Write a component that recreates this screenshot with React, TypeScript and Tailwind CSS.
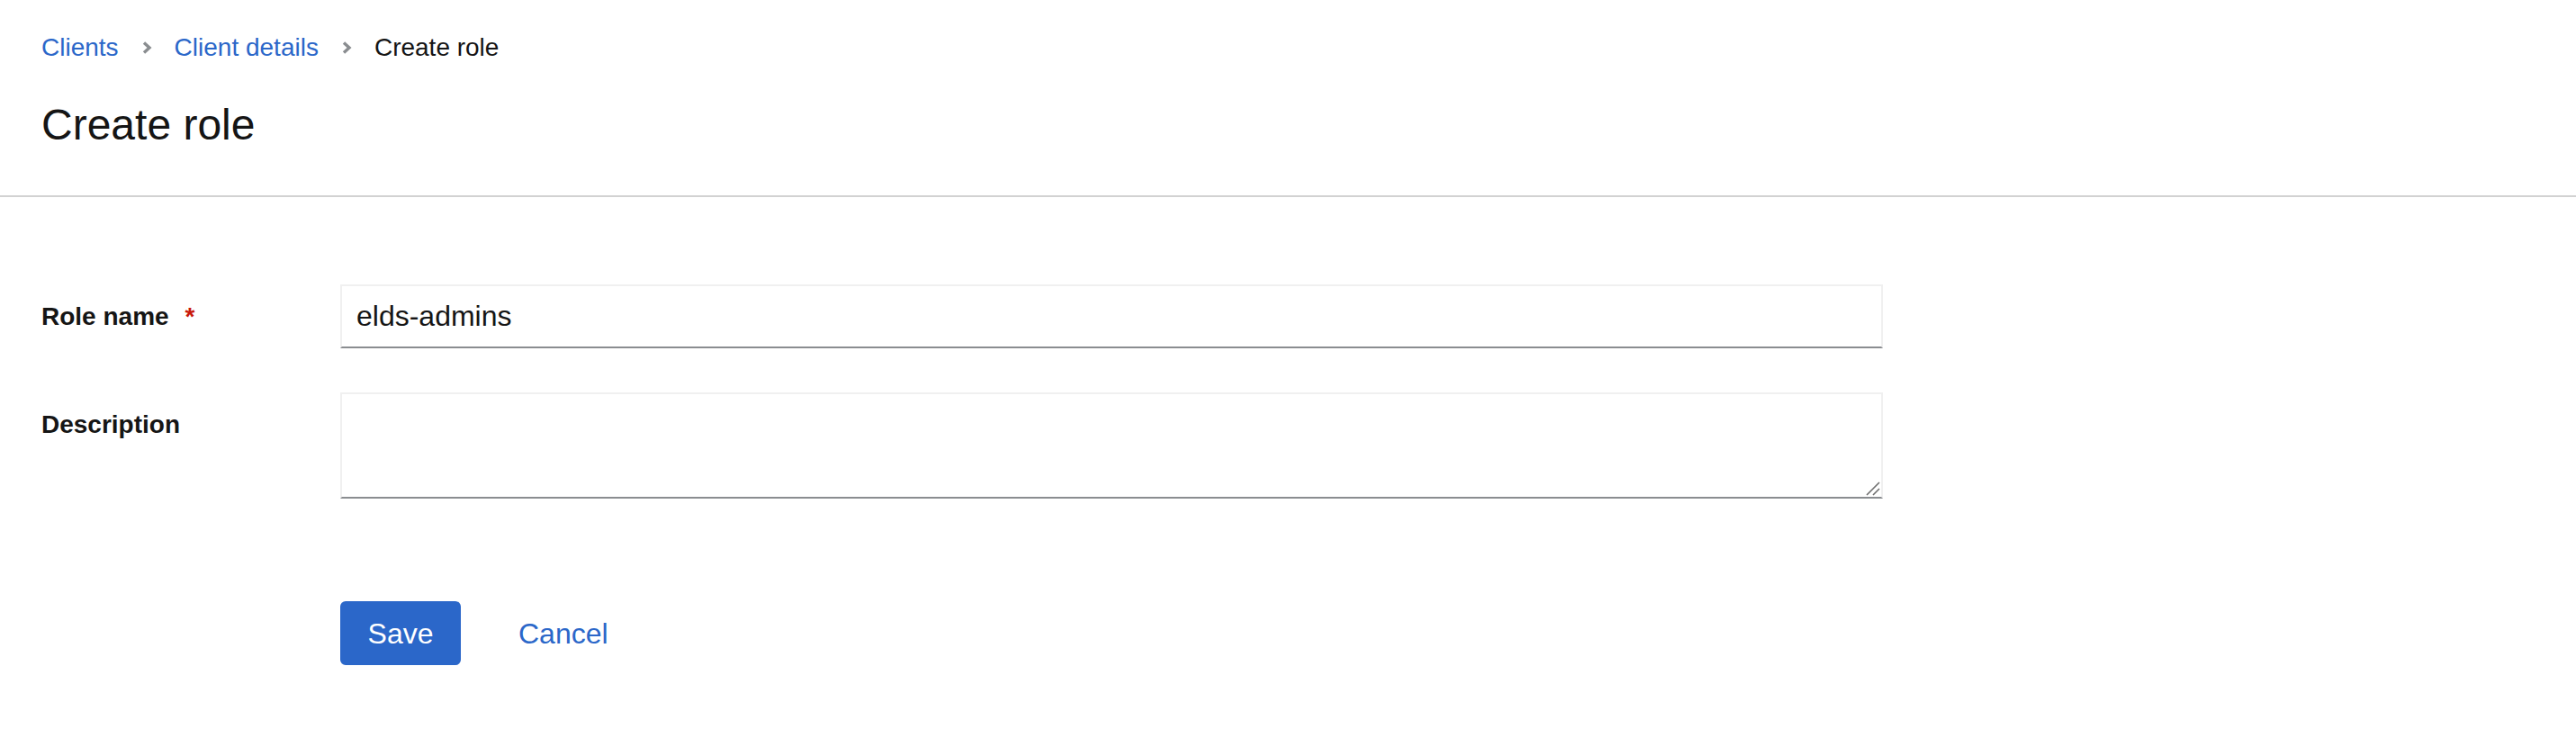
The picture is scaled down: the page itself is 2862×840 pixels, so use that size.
import { useState } from 'react'

const font = { fontFamily: '"Liberation Sans", Arial, sans-serif' }

function Chevron() {
  return (
    <svg width="12" height="14" viewBox="0 0 12 14" className="ml-[26px] mr-[24px]">
      <path d="M2 1.5 L8 7 L2 12.5" fill="none" stroke="#8a8d90" strokeWidth="3.4" strokeLinejoin="miter" />
    </svg>
  )
}

export default function App() {
  const [name, setName] = useState('elds-admins')
  const [desc, setDesc] = useState('')

  return (
    <div className="min-h-[840px] w-full bg-white text-[#151515]" style={font}>
      {/* Header */}
      <section className="px-[46px] pt-[32px] pb-[47px] border-b-2 border-[#d2d2d2]">
        <nav className="flex items-center text-[28px] leading-[42px]">
          <a className="text-[#2b67c9]" href="#">Clients</a>
          <Chevron />
          <a className="text-[#2b67c9]" href="#">Client details</a>
          <Chevron />
          <span className="text-[#151515]">Create role</span>
        </nav>
        <h1 className="mt-[34px] text-[48px] leading-[62px] font-normal">Create role</h1>
      </section>

      {/* Form */}
      <section className="px-[46px] pt-[97px]">
        <div className="grid grid-cols-[332px_1714px] gap-y-[49px]">
          <label className="pt-[15px] text-[28px] leading-[42px] font-bold">
            Role name <span className="ml-[10px] text-[#c9190b]">*</span>
          </label>
          <input
            value={name}
            onChange={e => setName(e.target.value)}
            className="h-[71px] w-full border-2 border-[#f0f0f0] border-b-[#8a8d90] px-[16px] text-[32px] outline-none"
          />

          <label className="pt-[15px] text-[28px] leading-[42px] font-bold">Description</label>
          <div className="relative">
            <textarea
              value={desc}
              onChange={e => setDesc(e.target.value)}
              className="block h-[118px] w-full resize-none border-2 border-[#f0f0f0] border-b-[#8a8d90] px-[16px] py-[8px] text-[32px] outline-none"
            />
            <svg width="16" height="16" viewBox="0 0 16 16" className="absolute right-[3px] bottom-[3px] pointer-events-none">
              <path d="M1 15 L15 1 M8 15 L15 8" stroke="#707070" strokeWidth="1.6" />
            </svg>
          </div>
        </div>

        <div className="mt-[114px] ml-[332px] flex items-center gap-[32px]">
          <button className="h-[71px] w-[134px] rounded-[6px] bg-[#2b67c9] text-[32px] text-white">Save</button>
          <button className="h-[71px] px-[32px] text-[32px] text-[#2b67c9]">Cancel</button>
        </div>
      </section>
    </div>
  )
}
